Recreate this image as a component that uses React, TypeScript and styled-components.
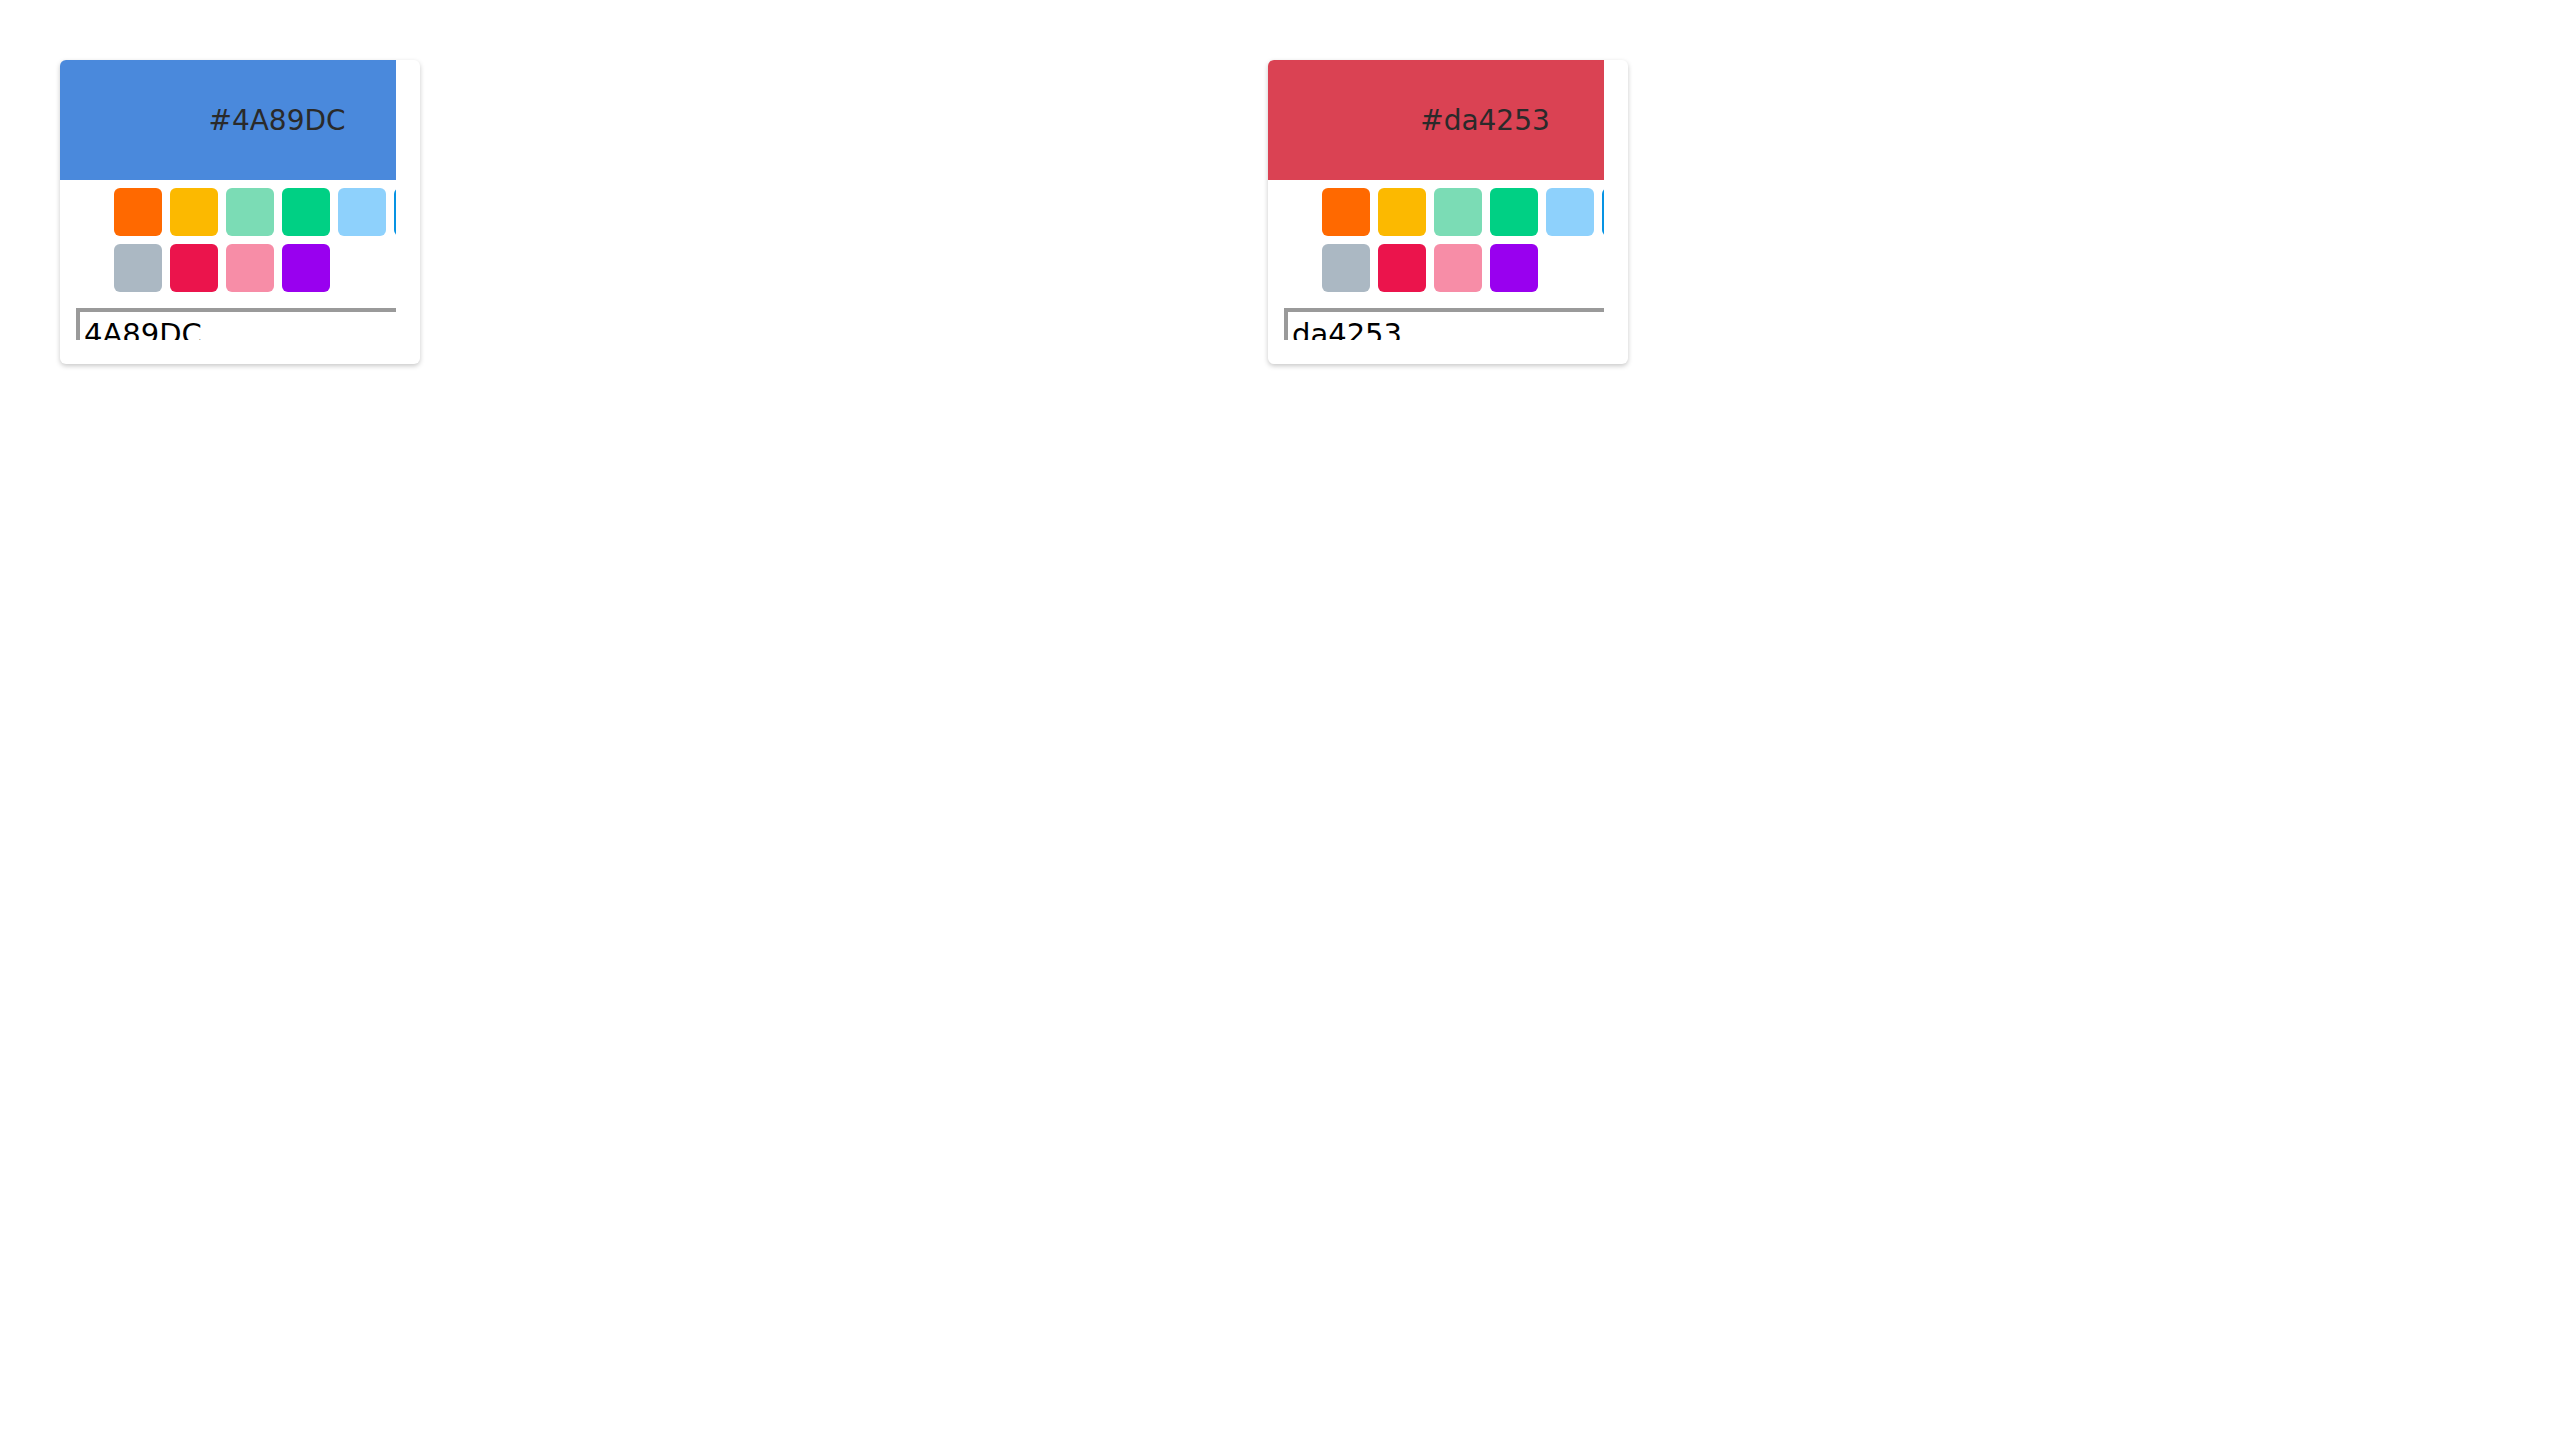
import React from "react";
import styled, { createGlobalStyle } from "styled-components";

const GlobalStyle = createGlobalStyle`
  html, body {
    margin: 0;
    background: #fff;
    font-family: "DejaVu Sans", "Liberation Sans", sans-serif;
  }
`;

const Page = styled.main`
  display: grid;
  grid-template-columns: 1184px 1184px;
  gap: 24px;
  padding: 60px;
  align-items: start;
`;

const Card = styled.div`
  width: 360px;
  box-sizing: border-box;
  padding: 0 24px 24px 0;
  background: #fff;
  border-radius: 6px;
  box-shadow: 0 2px 5px rgba(0, 0, 0, 0.22);
`;

const Clip = styled.div`
  width: 336px;
  height: 280px;
  overflow: hidden;
  border-top-left-radius: 6px;
`;

const Inner = styled.div`
  width: 434px;
  display: flex;
  flex-direction: column;
`;

const Head = styled.div<{ $bg: string }>`
  height: 120px;
  background: ${(p) => p.$bg};
  display: flex;
  align-items: center;
  justify-content: center;
  color: #2a2a2a;
  font-size: 28px;
`;

const Swatches = styled.div`
  display: flex;
  flex-wrap: wrap;
  gap: 8px;
  width: 340px;
  margin: 8px 0 16px 54px;
`;

const Swatch = styled.div<{ $c: string }>`
  width: 48px;
  height: 48px;
  border-radius: 6px;
  background: ${(p) => p.$c};
  cursor: pointer;
`;

const HexInput = styled.input`
  margin-left: 16px;
  width: 400px;
  box-sizing: border-box;
  border: 4px solid;
  border-color: #9a9a9a #dcdcdc #dcdcdc #9a9a9a;
  padding: 5px 4px 4px;
  font-family: inherit;
  font-size: 29px;
  color: #000;
  outline: none;
  background: #fff;
`;

const COLORS = [
  "#FF6900",
  "#FCB900",
  "#7BDCB5",
  "#00D084",
  "#8ED1FC",
  "#0693E3",
  "#ABB8C3",
  "#EB144C",
  "#F78DA7",
  "#9900EF",
];

const Picker = ({ hex }: { hex: string }) => (
  <Card>
    <Clip>
      <Inner>
        <Head $bg={"#" + hex}>#{hex}</Head>
        <Swatches>
          {COLORS.map((c) => (
            <Swatch key={c} $c={c} title={c} />
          ))}
        </Swatches>
        <HexInput defaultValue={hex} />
      </Inner>
    </Clip>
  </Card>
);

export default function App() {
  return (
    <>
      <GlobalStyle />
      <Page>
        <Picker hex="4A89DC" />
        <Picker hex="da4253" />
      </Page>
    </>
  );
}
